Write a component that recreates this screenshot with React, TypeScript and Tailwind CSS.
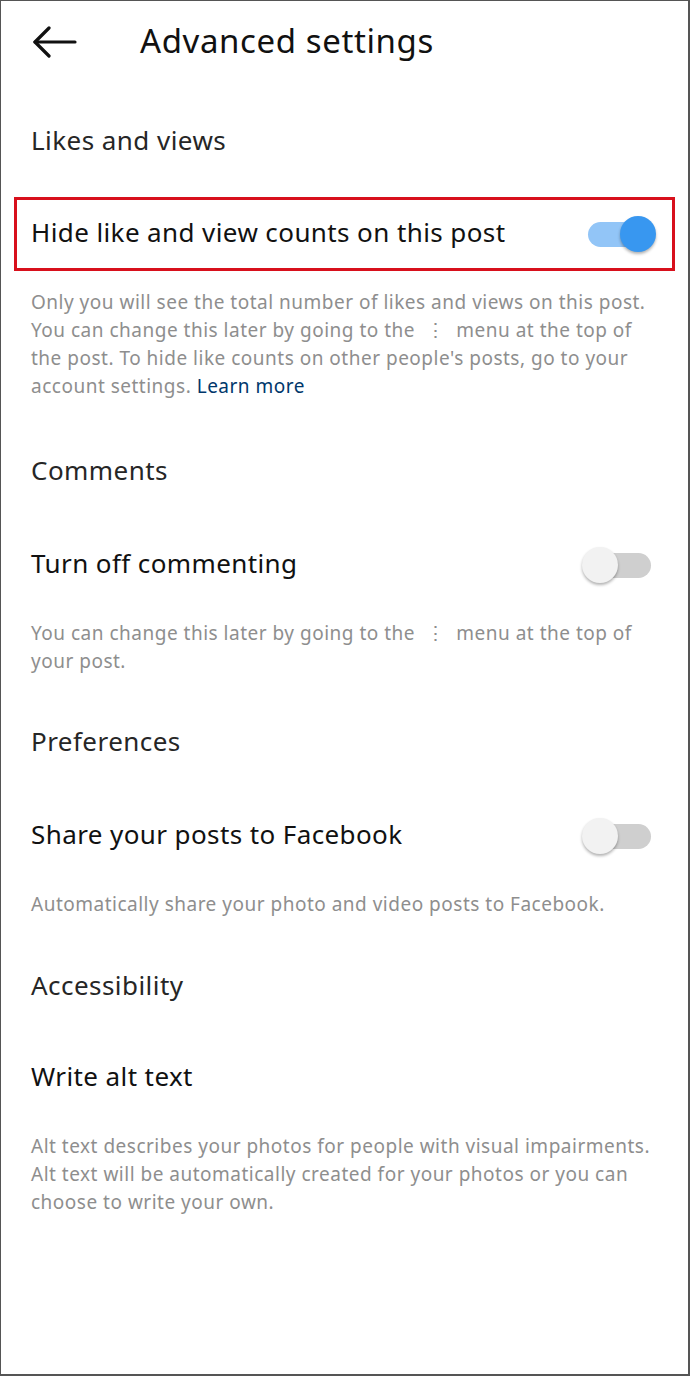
import React from "react";

function Toggle({ on }: { on: boolean }) {
  if (on) {
    return (
      <div className="relative h-[36px] w-[72px]">
        <div className="absolute left-[1px] top-[6px] h-[25px] w-[58px] rounded-full bg-[#92c5f7]" />
        <div className="absolute left-[33px] top-[0px] h-[36px] w-[36px] rounded-full bg-[#3897f0] shadow-[0_2px_3px_rgba(0,0,0,0.3)]" />
      </div>
    );
  }
  return (
    <div className="relative h-[36px] w-[72px]">
      <div className="absolute left-[12px] top-[6px] h-[25px] w-[58px] rounded-full bg-[#cfcfcf]" />
      <div className="absolute left-[1px] top-[0px] h-[36px] w-[36px] rounded-full bg-[#f2f2f2] shadow-[0_2px_3px_rgba(0,0,0,0.3)]" />
    </div>
  );
}

const font = { fontFamily: "'Noto Sans', 'Open Sans', sans-serif" };

const heading = "flex h-[60px] items-center pb-[3px] pl-[30px] text-[26px] tracking-[0.45px] text-[#262626]";
const rowText = "text-[26px] tracking-[0.4px] text-[#111]";
const desc = "px-[30px] text-[19px] leading-[28px] tracking-[0.5px] text-[#8e8e8e] whitespace-nowrap";

export default function App() {
  return (
    <div
      style={font}
      className="w-[690px] min-h-[1376px] border-l border-t border-r-2 border-b-2 border-[#555] bg-white"
    >
      <div className="flex h-[82px] items-center pb-[3px]">
        <div className="ml-[32px] w-[107px] pt-[3px]">
          <svg width="44" height="32" viewBox="0 0 44 32" fill="none" stroke="#111" strokeWidth="3.2" strokeLinecap="round" strokeLinejoin="round">
            <path d="M2 16 H42" />
            <path d="M16 2 L2 16 L16 30" />
          </svg>
        </div>
        <div className="text-[33px] tracking-[0.6px] text-[#111]">Advanced settings</div>
      </div>

      <div className="flex h-[114px] items-center pt-[1px] pl-[30px] text-[26px] tracking-[0.45px] text-[#262626]">
        Likes and views
      </div>

      <div className="mx-[13px] flex h-[74px] items-center justify-between border-[3px] border-[#d8101c] pl-[14px] pr-[13px]">
        <span className={rowText + " pb-[3px]"}>Hide like and view counts on this post</span>
        <Toggle on />
      </div>

      <p className={"mt-[17px] " + desc}>
        Only you will see the total number of likes and views on this post.<br />
        You can change this later by going to the &nbsp;⋮&nbsp; menu at the top of<br />
        the post. To hide like counts on other people's posts, go to your<br />
        account settings. <span className="text-[#00376b]">Learn more</span>
      </p>

      <div className={"mt-[42px] " + heading}>Comments</div>

      <div className="mt-[33px] flex h-[60px] items-center justify-between pl-[30px] pr-[35px]">
        <span className={rowText + " pb-[3px]"}>Turn off commenting</span>
        <Toggle on={false} />
      </div>

      <p className={"mt-[24px] " + desc}>
        You can change this later by going to the &nbsp;⋮&nbsp; menu at the top of<br />
        your post.
      </p>

      <div className={"mt-[38px] " + heading}>Preferences</div>

      <div className="mt-[33px] flex h-[60px] items-center justify-between pl-[30px] pr-[35px]">
        <span className={rowText + " pb-[3px]"}>Share your posts to Facebook</span>
        <Toggle on={false} />
      </div>

      <p className={"mt-[24px] " + desc}>
        Automatically share your photo and video posts to Facebook.
      </p>

      <div className={"mt-[39px] " + heading}>Accessibility</div>

      <div className="mt-[31px] flex h-[60px] items-center pl-[30px]">
        <span className={rowText + " pb-[3px]"}>Write alt text</span>
      </div>

      <p className={"mt-[24px] " + desc}>
        Alt text describes your photos for people with visual impairments.<br />
        Alt text will be automatically created for your photos or you can<br />
        choose to write your own.
      </p>
    </div>
  );
}
